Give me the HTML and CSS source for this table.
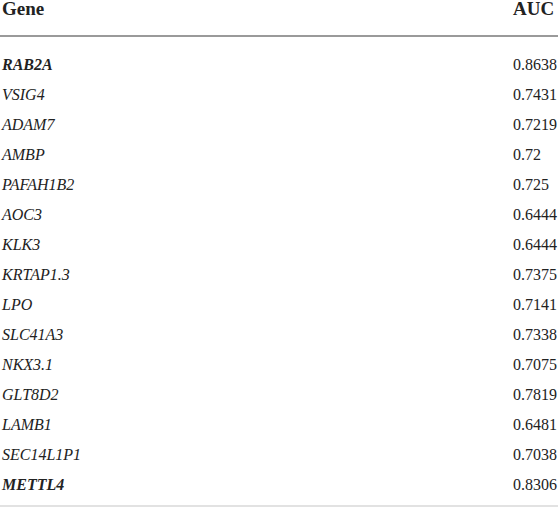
FILE: index.html
```html
<!DOCTYPE html>
<html>
<head>
<meta charset="utf-8">
<link rel="stylesheet" href="styles.css">
</head>
<body>
<div class="table">
  <div class="head">
    <span class="gene">Gene</span>
    <span class="auc">AUC</span>
  </div>
  <div class="body">
    <div class="row"><span class="gene b">RAB2A</span><span class="auc">0.8638</span></div>
    <div class="row"><span class="gene">VSIG4</span><span class="auc">0.7431</span></div>
    <div class="row"><span class="gene">ADAM7</span><span class="auc">0.7219</span></div>
    <div class="row"><span class="gene">AMBP</span><span class="auc">0.72</span></div>
    <div class="row"><span class="gene">PAFAH1B2</span><span class="auc">0.725</span></div>
    <div class="row"><span class="gene">AOC3</span><span class="auc">0.6444</span></div>
    <div class="row"><span class="gene">KLK3</span><span class="auc">0.6444</span></div>
    <div class="row"><span class="gene">KRTAP1.3</span><span class="auc">0.7375</span></div>
    <div class="row"><span class="gene">LPO</span><span class="auc">0.7141</span></div>
    <div class="row"><span class="gene">SLC41A3</span><span class="auc">0.7338</span></div>
    <div class="row"><span class="gene">NKX3.1</span><span class="auc">0.7075</span></div>
    <div class="row"><span class="gene">GLT8D2</span><span class="auc">0.7819</span></div>
    <div class="row"><span class="gene">LAMB1</span><span class="auc">0.6481</span></div>
    <div class="row"><span class="gene">SEC14L1P1</span><span class="auc">0.7038</span></div>
    <div class="row"><span class="gene b">METTL4</span><span class="auc">0.8306</span></div>
  </div>
</div>
</body>
</html>
```
FILE: styles.css
```css
html, body {
  margin: 0;
  padding: 0;
  background: #fff;
}
.table {
  width: 558px;
  font-family: "Liberation Serif", "Times New Roman", serif;
  color: #222;
}
.head {
  display: flex;
  justify-content: space-between;
  height: 35px;
  border-bottom: 2px solid #9a9a9a;
  font-weight: bold;
  font-size: 19px;
  line-height: 18px;
  padding-left: 2px;
}
.head .auc {
  width: 45px;
}
.body {
  padding-top: 13px;
  padding-bottom: 5px;
  border-bottom: 2px solid #e2e2e2;
}
.row {
  display: flex;
  justify-content: space-between;
  height: 30px;
  line-height: 30px;
  font-size: 16px;
  padding-left: 2px;
}
.row .gene {
  font-style: italic;
}
.row .gene.b {
  font-weight: bold;
}
.row .auc {
  width: 45px;
}
```
